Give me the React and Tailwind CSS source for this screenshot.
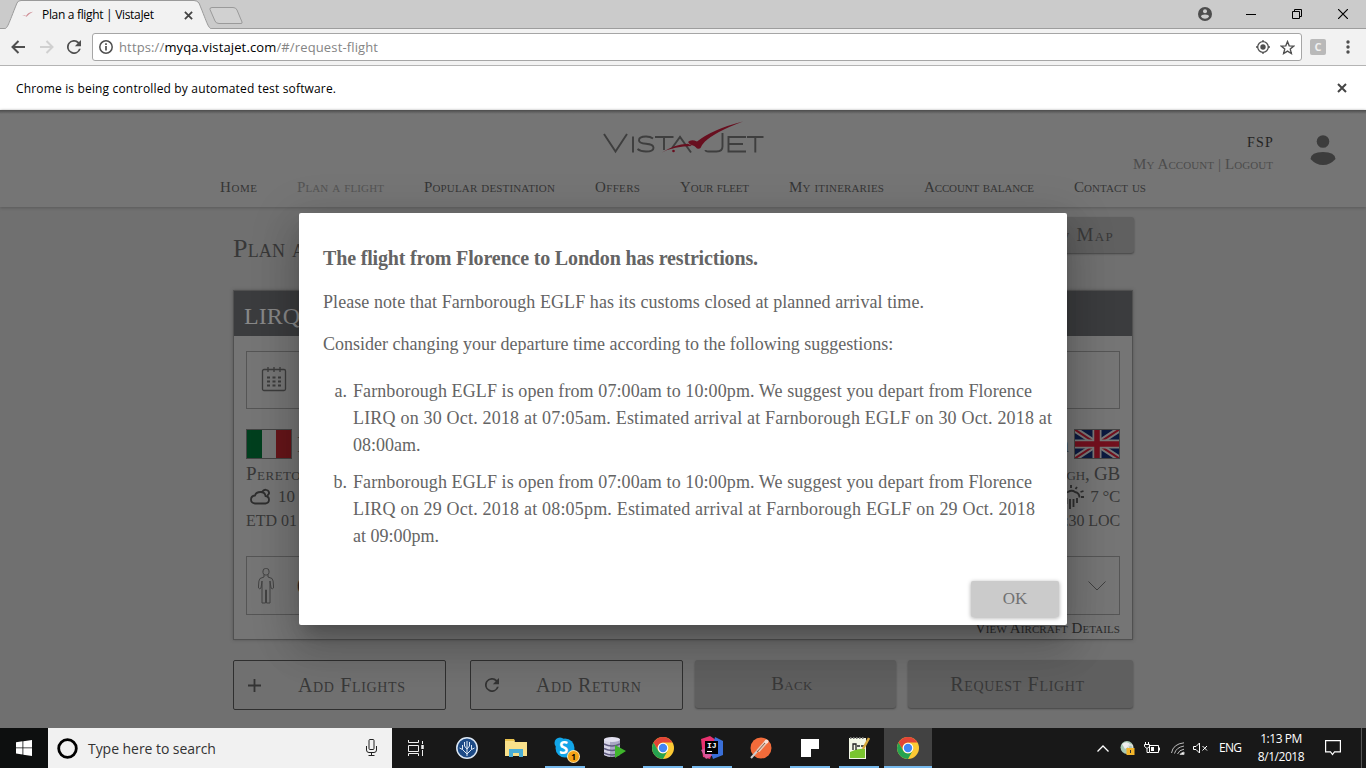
import React from "react";

const SERIF = "font-['Liberation_Serif',serif]";
const SANS = "font-['Open_Sans',sans-serif]";

function Line({ className = "", children }) {
  return <span className={"block whitespace-nowrap " + className}>{children}</span>;
}

function Cross({ className }) {
  return (
    <svg className={className} viewBox="0 0 10 10" fill="none" stroke="currentColor" strokeWidth="2">
      <path d="M1 1l8 8M9 1L1 9" />
    </svg>
  );
}

function Reload({ className }) {
  return (
    <svg className={className} viewBox="0 0 16 16" fill="currentColor">
      <path d="M13.65 2.35A8 8 0 1 0 15.73 10h-2.08A6 6 0 1 1 8 2c1.66 0 3.14.69 4.22 1.78L9 7h7V0z" />
    </svg>
  );
}

function TabStrip() {
  return (
    <div className="flex h-[29px] shrink-0 items-start bg-[#cbcbcb] shadow-[inset_0_-1px_0_#9d9d9d]">
      <div className="relative h-[29px] w-[212px] shrink-0">
        <svg className="absolute inset-0" width="212" height="29">
          <path d="M4 29C8 28 8 25 17 3Q18 .5 21 .5H194Q197 .5 199 3C208 25 208 28 212 29" fill="#f2f2f2" stroke="#9a9a9a" />
        </svg>
        <div className={"relative flex h-[30px] items-center pl-[21px] text-black " + SANS}>
          <svg width="12" height="8" viewBox="0 0 12 8">
            <path d="M1 4.800q3-1 4 .2q2-4 7-4.300q-4 2-6.500 5q-1.500-1.500-4.500-.9z" fill="#cf8d95" />
          </svg>
          <span className="ml-[9px] w-[142px] whitespace-nowrap text-[12px] tracking-[-0.32px]">Plan a flight | VistaJet</span>
          <Cross className="h-[9px] w-[9px] text-[#444]" />
        </div>
      </div>
      <svg className="-ml-[4px] mt-[6px]" width="37" height="20">
        <path d="M4 1.500H25Q28 1.500 29 4L34 16Q34.500 17.500 33 17.500H11Q8 17.500 7 15L2 3.500Q1.500 1.500 4 1.500Z" fill="#d1d1d1" stroke="#9a9a9a" />
      </svg>
      <div className="ml-auto flex h-[27px] items-center">
        <svg className="mr-[34px]" width="14" height="14" viewBox="0 0 14 14">
          <circle cx="7" cy="7" r="7" fill="#4d4d4d" />
          <circle cx="7" cy="4.300" r="2" fill="#cbcbcb" />
          <path d="M3 9.800q0-2.200 4-2.200t4 2.200q-1.500 2-4 2t-4-2z" fill="#cbcbcb" />
        </svg>
        <svg className="mr-[36px]" width="10" height="10"><path d="M0 5.500h10" stroke="#000" /></svg>
        <svg className="mr-[36px]" width="10" height="10" fill="none" stroke="#000">
          <path d="M.5 2.500h7v7h-7zM2.500 2.500v-2h7v7h-2" />
        </svg>
        <svg className="mr-[18px]" width="10" height="10" stroke="#000" strokeWidth="1.200"><path d="M0 0l10 10M10 0L0 10" /></svg>
      </div>
    </div>
  );
}

function Toolbar() {
  return (
    <div className="flex h-[37px] shrink-0 items-center border-b border-[#b4b4b4] bg-[#f2f2f2] pl-[11px]">
      <svg width="14" height="14" viewBox="0 0 14 14" fill="none" stroke="#4f4f4f" strokeWidth="2"><path d="M14 7H2M7.500 1L1.500 7l6 6" /></svg>
      <svg className="ml-[15px]" width="14" height="14" viewBox="0 0 14 14" fill="none" stroke="#d0d0d0" strokeWidth="2"><path d="M0 7h12M6.500 1l6 6-6 6" /></svg>
      <Reload className="ml-[13px] h-[14px] w-[14px] text-[#4f4f4f]" />
      <div className="ml-[11px] flex h-[28px] w-[1210px] items-center rounded-[3px] border border-[#a6a6a6] bg-white pl-[6px]">
        <svg width="14" height="14" viewBox="0 0 14 14" fill="none" stroke="#4f4f4f" strokeWidth="1.500">
          <circle cx="7" cy="7" r="6.200" /><path d="M7 6v4.500M7 3.300v1.600" strokeWidth="1.700" />
        </svg>
        <span className={"ml-[6px] whitespace-nowrap pt-px text-[13px] tracking-[0.136px] text-[#858585] " + SANS}>
          https://<span className="text-black">myqa.vistajet.com</span>/#/request-flight
        </span>
        <svg className="ml-auto" width="14" height="14" viewBox="0 0 14 14" fill="none" stroke="#4f4f4f" strokeWidth="1.300">
          <circle cx="7" cy="7" r="5.300" /><circle cx="7" cy="7" r="2.700" fill="#4f4f4f" stroke="none" /><path d="M7 0v2M7 12v2M0 7h2M12 7h2" />
        </svg>
        <svg className="ml-[10px] mr-[6px]" width="15" height="15" viewBox="0 0 24 24" fill="none" stroke="#4f4f4f" strokeWidth="2.200">
          <path d="M12 2.500l2.700 6.800 7.300.5-5.600 4.700 1.800 7.100L12 17.700l-6.200 3.900 1.800-7.100L2 9.800l7.300-.5z" />
        </svg>
      </div>
      <span className={"ml-[8px] flex h-[16px] w-[16px] items-center justify-center rounded-[2px] bg-[#b9b9b9] text-[11px] font-bold text-[#f0f0f0] " + SANS}>C</span>
      <svg className="ml-[20px]" width="4" height="14" fill="#4f4f4f"><circle cx="2" cy="2" r="1.700" /><circle cx="2" cy="7" r="1.700" /><circle cx="2" cy="12" r="1.700" /></svg>
    </div>
  );
}

function Logo() {
  return (
    <svg width="162" height="34" viewBox="0 0 162 34">
      <g fill="none" stroke="#3e3e3e" strokeWidth="1.900">
        <path d="M2 13l11.500 17.500L25 13" />
        <path d="M31 15.500v16" />
        <path d="M51 17.500q-2.500-2-7-2-7 0-7 3.700 0 3 7 3.500 7.500.6 7.500 4 0 3.800-7.500 3.800-5.500 0-8.500-2.500" />
        <path d="M53 16h18.500M62 16v13" />
        <path d="M70 27l8-11 11 15.500" />
        <path d="M120.500 12v13.500q0 5-6 5h-8q-3 0-3-1.500" />
        <path d="M144 16h-17.500v14.500H144M127 23h14" />
        <path d="M145 16h16.500M153.300 16v15.500" />
      </g>
      <path d="M60 31.500Q72 23.500 86 22.700l4 2.300Q72 25 60 31.500z" fill="#680f1f" />
      <path d="M86 21q3-3 9-.500Q111 8 141 .500q-27 10-38 20-3 3-4.500 6.500-1 1-3.500.5-2-3-7-4z" fill="#680f1f" />
      <circle cx="71.500" cy="30" r="1.300" fill="#680f1f" />
    </svg>
  );
}

const NAV = [
  ["Home", "w-[77px] text-[15px] tracking-[0.57px]"],
  ["Plan a flight", "w-[127px] text-[15px] tracking-[0.12px] text-[#545454]"],
  ["Popular destination", "w-[171px] text-[15px] tracking-[0.15px]"],
  ["Offers", "w-[85px] text-[15px] tracking-[0.35px]"],
  ["Your fleet", "w-[109px] text-[15px] tracking-[-0.2px]"],
  ["My itineraries", "w-[135px] text-[15px] tracking-[0.16px]"],
  ["Account balance", "w-[150px] text-[15px] tracking-[-0.13px]"],
  ["Contact us", "w-[80px] text-[15px] tracking-[0.05px]"],
];

function SiteHeader() {
  return (
    <header className="z-10 flex h-[97px] shrink-0 flex-col bg-[#757575] text-[#363636] shadow-[0_1px_3px_#5a5a5a]">
      <div className="h-[4px] bg-linear-to-b from-[#4c4c4c] to-[#757575]" />
      <div className="flex h-[63px] items-start">
        <div className="ml-[602px] mt-[7px]"><Logo /></div>
        <div className="ml-auto mr-[37px] mt-[20px] flex flex-col items-end">
          <Line className="-mr-[1px] h-[18px] text-[14px] leading-[18px] tracking-[1.2px] text-[#242424]">FSP</Line>
          <Line className="h-[22px] w-[140px] pt-px text-[15px] leading-[22px] tracking-[0.09px] text-[#4c4c4c] [font-variant-caps:small-caps]">My Account | Logout</Line>
        </div>
        <svg className="mr-[30px] mt-[21px]" width="26" height="31" viewBox="0 0 26 31" fill="#3c3c3c">
          <circle cx="13" cy="6.500" r="6.300" /><path d="M.5 24Q1 17 13 17t12.500 7Q20 30 13 30T.5 24z" />
        </svg>
      </div>
      <nav className="flex pl-[220px] leading-[20px] [font-variant-caps:small-caps]">
        {NAV.map(([t, c]) => <Line key={t} className={c}>{t}</Line>)}
      </nav>
    </header>
  );
}

function Calendar() {
  return (
    <svg width="26" height="26" viewBox="0 0 26 26" fill="none" stroke="#3c3c3c" strokeWidth="1.300">
      <rect x="1.500" y="2.500" width="23" height="21" rx="1.500" />
      <path d="M7 0v5M13 0v5M19 0v5" />
      <path d="M6 10.500h3m2.500 0h3m2.500 0h3M6 14.500h3m2.500 0h3m2.500 0h3M6 18.500h3m2.500 0h3m2.500 0h3" strokeWidth="2" />
    </svg>
  );
}

function Person() {
  return (
    <svg width="18" height="36" viewBox="0 0 18 36" fill="none" stroke="#434343" strokeWidth="1">
      <rect x="6" y=".5" width="6" height="6.500" rx="2.500" />
      <path d="M7 7v2L3 10.500Q1.500 12 1.500 18v2q1 1.500 2.500 0l1-7v22h3.500V22h1V35H13V13l1 7q1.500 1.500 2.500 0v-2q0-6-1.500-7.500L11 9V7" />
    </svg>
  );
}

function UnionJack() {
  return (
    <svg width="46" height="30" viewBox="0 0 46 30">
      <rect width="46" height="30" fill="#0c1a3f" />
      <path d="M0 0l46 30M46 0L0 30" stroke="#777" strokeWidth="6" />
      <path d="M0 0l46 30M46 0L0 30" stroke="#72101e" strokeWidth="2" />
      <path d="M23 0v30M0 15h46" stroke="#777" strokeWidth="9" />
      <path d="M23 0v30M0 15h46" stroke="#72101e" strokeWidth="5.500" />
      <rect x=".5" y=".5" width="45" height="29" fill="none" stroke="#444" />
    </svg>
  );
}

function FlightCard() {
  return (
    <section className="h-[350px] w-[900px] border border-[#505050] bg-[#757575] shadow-[0_0_3px_#555]">
      <div className="flex h-[45px] items-center bg-[#3b3c3e] pl-[10px] pt-[4px] text-[24px] text-[#888]">LIRQ</div>
      <div className="px-[12px] pt-[15px]">
        <div className="flex h-[58px] items-center border border-[#555] pl-[14px]"><Calendar /></div>
        <div className="mt-[20px] flex h-[30px] items-center justify-between">
          <div className="flex items-center">
            <div className="flex h-[30px] w-[46px] border border-[#444]">
              <i className="flex-1 bg-[#003f1e]" /><i className="flex-1 bg-[#767676]" /><i className="flex-1 bg-[#651519]" />
            </div>
            <span className="ml-[5px] text-[24px]">F</span>
          </div>
          <div className="flex items-center"><span className="mr-[5px] text-[24px]">n</span><UnionJack /></div>
        </div>
        <div className="flex h-[29px] items-center justify-between whitespace-nowrap pt-px text-[19px] [font-variant-caps:small-caps]">
          <span className="tracking-[0.5px]">Pereto</span><span className="tracking-[-0.2px]">gh, GB</span>
        </div>
        <div className="flex h-[18px] items-center justify-between text-[17px]">
          <div className="flex items-center">
            <svg className="ml-[4px] mr-[7px]" width="21" height="18" viewBox="0 0 21 18" fill="none" stroke="#2e2e2e" strokeWidth="1.800">
              <path d="M5 15.500q-4-.5-4-4t4-4q1-3.500 5.500-3.500t5 4q3.500.5 3.500 3.800t-3.500 3.700zM12 4q2-3 4.500-2 3 1 2.500 3.500l-1.500 2" />
            </svg>
            10
          </div>
          <div className="flex items-center">
            <svg className="mr-[5px]" width="22" height="26" viewBox="0 0 22 26" fill="none" stroke="#2e2e2e" strokeWidth="1.800">
              <path d="M1 13.500q0-4.500 4-5.500 4-2.500 7 0 4.500 1 4.500 5.500M3.500 14v6M7 15v10M10.500 15v8M14 14v5M8 1v3M14 3l-1.500 2M17.500 8l3-1M18 13h3M2 3l1.500 2" />
            </svg>
            <span className="tracking-[-0.3px]">7 °C</span>
          </div>
        </div>
        <div className="flex h-[28px] items-center justify-between pt-px text-[16px]"><span>ETD 01</span><span className="tracking-[-0.1px]">:30 LOC</span></div>
        <div className="mt-[22px] flex h-[59px] items-center justify-between border border-[#555] pl-[10px] pr-[13px]">
          <div className="flex items-center"><Person /><span className="ml-[22px] text-[22px] text-[#222]">0</span></div>
          <svg width="18" height="10" fill="none" stroke="#3f3f3f"><path d="M.5.5L9 9 17.500.5" /></svg>
        </div>
        <Line className="mt-[3px] text-right text-[15px] leading-[20px] tracking-[0.08px] text-[#2b2b2b] [font-variant-caps:small-caps]">View Aircraft Details</Line>
      </div>
    </section>
  );
}

function PageBody() {
  const outlined = "flex h-[50px] w-[213px] items-center rounded-[2px] border border-[#2f2f2f] pl-[14px]";
  const filled = "flex h-[48px] items-center justify-center rounded-[3px] bg-[#5f5f5f] shadow-[0_1px_2px_#444]";
  return (
    <main className="flex-1 bg-[#707070] pl-[233px] pt-[10px] text-[#383838]">
      <div className="flex h-[37px] w-[901px] justify-between">
        <h1 className="whitespace-nowrap pt-[16px] text-[26px] leading-[32px] tracking-[0.2px] [font-variant-caps:small-caps]">Plan a</h1>
        <div className="flex h-[36px] w-[150px] items-center justify-end whitespace-nowrap rounded-[3px] bg-[#606060] pr-[20px] text-[19px] tracking-[1.3px] shadow-[0_1px_2px_#444] [font-variant-caps:small-caps]">w Map</div>
      </div>
      <div className="mt-[36px]"><FlightCard /></div>
      <div className="mt-[20px] flex text-[20px] [font-variant-caps:small-caps]">
        <div className={outlined}>
          <svg width="13" height="13" stroke="#333" strokeWidth="1.800"><path d="M6.500 0v13M0 6.500h13" /></svg>
          <Line className="ml-[37px] tracking-[0.64px]">Add Flights</Line>
        </div>
        <div className={outlined + " ml-[24px]"}>
          <Reload className="h-[14px] w-[14px] text-[#333]" />
          <Line className="ml-[37px] tracking-[0.59px]">Add Return</Line>
        </div>
        <div className={filled + " ml-[12px] w-[201px] pr-[7px] text-[19px] tracking-[0.3px]"}>Back</div>
        <div className={filled + " ml-[12px] w-[225px] pr-[6px] tracking-[0.68px]"}>Request Flight</div>
      </div>
    </main>
  );
}

function Dialog() {
  return (
    <div
      role="dialog"
      className="absolute left-[299px] top-[103px] z-20 flex h-[412px] w-[768px] flex-col rounded-[2px] bg-white px-[24px] pt-[32px] text-[18px] leading-[27px] text-[#646464] shadow-[0_11px_15px_-7px_rgba(0,0,0,0.2),0_24px_38px_3px_rgba(0,0,0,0.14),0_9px_46px_8px_rgba(0,0,0,0.12)]"
    >
      <Line className="text-[20px] font-bold tracking-[-0.163px]">The flight from Florence to London has restrictions.</Line>
      <Line className="mt-[17px] tracking-[0.07px]">Please note that Farnborough EGLF has its customs closed at planned arrival time.</Line>
      <Line className="mt-[15px]">Consider changing your departure time according to the following suggestions:</Line>
      <ol className="mt-[20px] flex flex-col gap-[10px]">
        <li className="flex">
          <span className="w-[24px] shrink-0 text-right">a.</span>
          <div className="ml-[6px]">
            <Line className="tracking-[0.094px]">Farnborough EGLF is open from 07:00am to 10:00pm. We suggest you depart from Florence</Line>
            <Line className="tracking-[0.189px]">LIRQ on 30 Oct. 2018 at 07:05am. Estimated arrival at Farnborough EGLF on 30 Oct. 2018 at</Line>
            <Line>08:00am.</Line>
          </div>
        </li>
        <li className="flex">
          <span className="w-[24px] shrink-0 text-right">b.</span>
          <div className="ml-[6px]">
            <Line className="tracking-[0.094px]">Farnborough EGLF is open from 07:00am to 10:00pm. We suggest you depart from Florence</Line>
            <Line className="tracking-[0.189px]">LIRQ on 29 Oct. 2018 at 08:05pm. Estimated arrival at Farnborough EGLF on 29 Oct. 2018</Line>
            <Line>at 09:00pm.</Line>
          </div>
        </li>
      </ol>
      <button className="-mr-[16px] mb-[8px] mt-auto h-[36px] w-[88px] self-end rounded-[2px] bg-[#cbcbcb] pb-px text-[17px] text-[#717171] shadow-[0_1px_4px_rgba(0,0,0,0.35)]">OK</button>
    </div>
  );
}

function Chrome() {
  return (
    <svg width="22" height="22" viewBox="0 0 22 22">
      <circle cx="11" cy="11" r="11" fill="#fcc934" />
      <path d="M1.500 5.500A11 11 0 0 1 20.500 5.500H11A5.500 5.500 0 0 0 6.200 13.700z" fill="#e24437" />
      <path d="M1.500 5.500A11 11 0 0 0 11 22L15.700 13.800A5.500 5.500 0 0 1 6.200 13.700z" fill="#26a350" />
      <circle cx="11" cy="11" r="5.300" fill="#fff" /><circle cx="11" cy="11" r="4.200" fill="#4285f4" />
    </svg>
  );
}

const APPS = [
  ["sourcetree", "", (
    <svg width="22" height="22" viewBox="0 0 22 22" fill="none" stroke="#dce8f5">
      <circle cx="11" cy="11" r="10.200" fill="#1c4a86" strokeWidth="1.500" />
      <path d="M11 19V4M11 17l-4.500-4.500M11 17l4.500-4.500M6.500 12.500V8M6.500 12.500l-3-1.500M15.500 12.500V8M15.500 12.500l3-1.500M11 12L8.500 9V5M11 12l2.500-3V5" strokeWidth="1" />
    </svg>
  )],
  ["explorer", "", (
    <svg width="22" height="20" viewBox="0 0 22 20">
      <path d="M0 2h9l1 2h12v14H0z" fill="#f8e08a" /><path d="M0 1h9l1 2H0z" fill="#e8c14d" /><path d="M4 19v-8h14v8h-4v-4H8v4z" fill="#49aed6" />
    </svg>
  )],
  ["skype", "run", (
    <span className="relative">
      <svg width="22" height="22" viewBox="0 0 22 22" fill="#12a5e8"><circle cx="11" cy="11" r="9.500" /><circle cx="6" cy="6" r="5.500" /><circle cx="16" cy="16" r="5.500" /></svg>
      <b className="absolute left-[5px] top-[-1px] text-[17px] leading-[23px] text-white">S</b>
      <b className="absolute -bottom-[3px] -right-[3px] flex h-[11px] w-[11px] items-center justify-center rounded-full bg-[#f5a317] text-[8px] text-black ring-1 ring-[#fde2a8]">1</b>
    </span>
  )],
  ["database", "", (
    <svg width="24" height="24" viewBox="0 0 24 24">
      <path d="M2 3v16q8 4 16 0V3z" fill="#a9a6c4" /><path d="M2 3v16q3 1.500 6 1.800V3z" fill="#d6d4e6" /><ellipse cx="10" cy="3.500" rx="8" ry="2.500" fill="#e2e0f0" />
      <path d="M2 8q8 4 16 0M2 12.500q8 4 16 0M2 17q8 4 16 0" stroke="#5f5b80" strokeWidth="1.500" fill="none" />
      <path d="M13 9l11 6-11 7z" fill="#3fb52c" />
    </svg>
  )],
  ["chrome", "run", <Chrome />],
  ["idea", "run", (
    <span className="relative">
      <svg width="24" height="24" viewBox="0 0 24 24">
        <path d="M1 3l9-3 6 4-6 19-7-2z" fill="#e8316f" /><path d="M1 14l5 9 7-4-5-8z" fill="#d5579b" /><path d="M15 1l8 4v14l-10 4-2-6z" fill="#3a6fd8" /><rect x="5" y="5" width="13" height="13" fill="#000" />
      </svg>
      <b className="absolute left-[7px] top-[5px] font-['Liberation_Mono',monospace] text-[8px] leading-[9px] text-white">IJ</b>
      <i className="absolute left-[7px] top-[15px] h-px w-[5px] bg-white" />
    </span>
  )],
  ["postman", "", (
    <svg width="22" height="22" viewBox="0 0 22 22"><circle cx="11" cy="11" r="10.500" fill="#f26b3a" /><path d="M1 21L11 10" stroke="#ccc" strokeWidth="2" /><path d="M8 14l8-9" stroke="#e9c9b8" strokeWidth="3.500" /><path d="M7 15l8-9" stroke="#806050" strokeWidth="1" /><circle cx="16.500" cy="4.500" r="2" fill="#f7e0d6" /></svg>
  )],
  ["notes", "run", (
    <svg width="18" height="18"><path d="M0 0h18v9h-9v9H0z" fill="#fff" /><path d="M9 18V9h9z" fill="#1a1a1a" /><path d="M9 9h9v1h-8v8H9z" fill="#fff" /><path d="M18 10v8h-8z" fill="#181818" /></svg>
  )],
  ["notepad", "run", (
    <svg width="22" height="24" viewBox="0 0 22 24">
      <rect x="1" y="2" width="17" height="21" fill="#f3f7e6" /><path d="M2 16q8-4 15-3v9H2z" fill="#79c52f" />
      <path d="M2 2h15" stroke="#777" strokeWidth="2" strokeDasharray="1.500 1.500" /><path d="M5 14V8h3v6M9 10h3M13 10h3" stroke="#222" strokeWidth="1.300" fill="none" /><path d="M21 2l-6 11" stroke="#d8a93c" strokeWidth="2.500" />
    </svg>
  )],
  ["browser", "active", <Chrome />],
];

function Taskbar() {
  return (
    <div className={"flex h-[40px] shrink-0 bg-[#181818] text-white " + SANS}>
      <div className="flex w-[48px] items-center justify-center bg-[#0d0f0f]">
        <svg width="16" height="16" fill="#fff"><path d="M0 2.200l6.500-.9v6.200H0zM7.300 1.200L16 0v7.500H7.300zM0 8.300h6.500v6.200L0 13.600zM7.300 8.300H16V16l-8.700-1.200z" /></svg>
      </div>
      <div className="flex w-[344px] items-center bg-[#f1f1f1] pl-[9px] pr-[14px] text-[#333]">
        <svg width="21" height="21" fill="none" stroke="#000" strokeWidth="2.800"><circle cx="10.500" cy="10.500" r="8.800" /></svg>
        <span className="ml-[10px] whitespace-nowrap text-[14px] tracking-[-0.05px]">Type here to search</span>
        <svg className="ml-auto" width="13" height="18" fill="none" stroke="#222"><rect x="4" y=".5" width="5" height="10" rx="1" /><path d="M1.500 7v4q0 2.500 2.500 2.500h5q2.500 0 2.500-2.500V7M6.500 13.500v3M3.500 16.500h6" /></svg>
      </div>
      <div className="mr-[2px] flex w-[48px] items-center justify-center">
        <svg width="16" height="16" fill="none" stroke="#eee"><path d="M.5 0v2.500h10V0M.5 5.500h10v6H.5zM.5 16v-2.500h10V16M14.500 1v3M14.500 10v6" /><path d="M14.500 5v4" strokeWidth="2.500" /></svg>
      </div>
      {APPS.map(([id, state, icon]) => (
        <div
          key={id}
          className={
            "ml-px flex w-[48px] flex-col items-center " + (state === "active" ? "bg-[#424242]" : "")
          }
        >
          <div className="flex flex-1 items-center pt-[2px]">{icon}</div>
          <div className={"h-[2px] " + (state === "active" ? "w-full bg-[#76b9ed]" : state === "run" ? "w-[40px] bg-[#76b9ed]" : "w-0")} />
        </div>
      ))}
      <div className="ml-auto flex items-center">
        <svg width="12" height="7" fill="none" stroke="#fff" strokeWidth="1.300"><path d="M.5 6.500L6 1l5.500 5.500" /></svg>
        <svg className="ml-[11px]" width="15" height="15" viewBox="0 0 15 15"><circle cx="7" cy="6.500" r="6.500" fill="#a8c9b5" /><path d="M2 3q5-4 9 1L5 8z" fill="#eee" /><rect x="6.500" y="7" width="8" height="7" fill="#f3b52a" /><path d="M8.500 7V5q2-2.500 4 0v2" stroke="#ddd" fill="none" strokeWidth="1.300" /><path d="M10.500 9v3" stroke="#333" /></svg>
        <svg className="ml-[9px]" width="16" height="13" fill="none" stroke="#fff"><path d="M5.500 3.500h9v7h-9zM15.500 5.500v3M.5 2.500h5v2L3 6.500.5 4.500zM1.500 0v2.500M4.500 0v2.500M3 6.500v4h2" /><path d="M7 5h3v4H7z" fill="#fff" stroke="none" /></svg>
        <svg className="ml-[11px]" width="14" height="13" fill="none" stroke="#bbb"><path d="M.5 11Q2 2 13 .8M3.500 11.500Q5 5.500 13 4M6.500 12Q8 8 13 7.200" /><path d="M9 12.500q1-2 4-2.500v2.500z" fill="#fff" /></svg>
        <svg className="ml-[8px]" width="15" height="12" fill="none" stroke="#fff"><path d="M.5 4.500H3l3.500-3.500v10L3 7.500H.5zM9.500 4l4.500 4.500M14 4L9.500 8.500" /></svg>
        <span className="ml-[11px] w-[23px] text-[12px] tracking-[-0.7px]">ENG</span>
        <div className="ml-[15px] w-[48px] text-center text-[12px] leading-[18px] tracking-[-0.45px]">
          <Line>1:13 PM</Line>
          <Line>8/1/2018</Line>
        </div>
        <svg className="ml-[20px]" width="16" height="16" fill="none" stroke="#fff" strokeWidth="1.200"><path d="M.6.6h14.800v11.300H9.500L7.500 14.500 5.500 11.900H.6z" /></svg>
        <div className="ml-[20px] mr-[4px] h-[40px] w-px bg-[#555]" />
      </div>
    </div>
  );
}

export default function App() {
  return (
    <div className="flex h-[768px] w-[1366px] flex-col overflow-hidden">
      <TabStrip />
      <Toolbar />
      <div className={"flex h-[44px] shrink-0 items-center justify-between bg-white pl-[16px] pr-[19px] text-black " + SANS}>
        <Line className="pt-px text-[12px] tracking-[0.163px]">Chrome is being controlled by automated test software.</Line>
        <Cross className="h-[10px] w-[10px] text-[#444]" />
      </div>
      <div className={"relative flex h-[618px] shrink-0 flex-col " + SERIF}>
        <SiteHeader />
        <PageBody />
        <Dialog />
      </div>
      <Taskbar />
    </div>
  );
}
